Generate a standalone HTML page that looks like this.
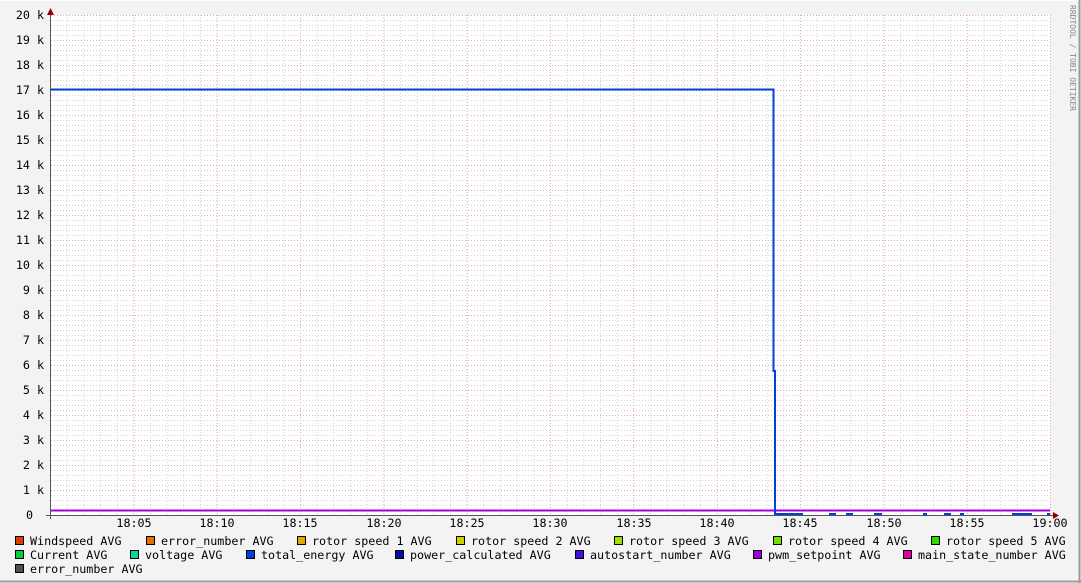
<!DOCTYPE html>
<html><head><meta charset="utf-8"><style>
html,body{margin:0;padding:0;background:#f3f3f3;}
svg{display:block;}
text{font-family:"DejaVu Sans Mono","Liberation Mono",monospace;font-size:11.7px;fill:#000;}
</style></head><body>
<svg width="1081" height="583" xmlns="http://www.w3.org/2000/svg">
<defs>
<pattern id="minV" x="50" y="0" width="16.667" height="583" patternUnits="userSpaceOnUse"><line x1="0.5" y1="0" x2="0.5" y2="583" stroke="#d4d4d4" stroke-dasharray="1,2"/></pattern>
<pattern id="minH" x="0" y="15" width="1081" height="5" patternUnits="userSpaceOnUse"><line x1="0" y1="0.5" x2="1081" y2="0.5" stroke="#d4d4d4" stroke-dasharray="1,2"/></pattern>
<pattern id="majV" x="50" y="0" width="83.333" height="583" patternUnits="userSpaceOnUse"><line x1="0.5" y1="0" x2="0.5" y2="583" stroke="#eaa8a8" stroke-dasharray="1,2"/></pattern>
<pattern id="majH" x="0" y="15" width="1081" height="25" patternUnits="userSpaceOnUse"><line x1="0" y1="0.5" x2="1081" y2="0.5" stroke="#eaa8a8" stroke-dasharray="1,2"/></pattern>
</defs>
<rect x="0" y="0" width="1081" height="583" fill="#f3f3f3"/>
<line x1="0" y1="0.5" x2="1081" y2="0.5" stroke="#fcfcfc"/>
<line x1="1079.5" y1="0" x2="1079.5" y2="583" stroke="#9c9c9c" stroke-width="2"/>
<line x1="0" y1="581.5" x2="1081" y2="581.5" stroke="#9c9c9c" stroke-width="2"/>
<rect x="50" y="15" width="1000" height="500" fill="#fff"/>
<rect x="50" y="15" width="1000" height="500" fill="url(#minV)"/>
<rect x="50" y="15" width="1000" height="500" fill="url(#minH)"/>
<rect x="50" y="15" width="1001" height="500" fill="url(#majV)"/>
<rect x="50" y="15" width="1000" height="500" fill="url(#majH)"/>
<line x1="50" y1="510.5" x2="1050" y2="510.5" stroke="#a000e0" stroke-width="2"/>
<polyline points="50,89.5 773.5,89.5 773.5,371 775,371 775,514 803,514" fill="none" stroke="#0040e0" stroke-width="2"/>
<g stroke="#0040e0" stroke-width="2">
<line x1="829" y1="514" x2="836" y2="514"/><line x1="846" y1="514" x2="853" y2="514"/><line x1="874" y1="514" x2="882" y2="514"/><line x1="923" y1="514" x2="927" y2="514"/><line x1="944" y1="514" x2="951" y2="514"/><line x1="960" y1="514" x2="964" y2="514"/><line x1="1012" y1="514" x2="1032" y2="514"/><line x1="1047" y1="514" x2="1050" y2="514"/>
</g>
<line x1="50.5" y1="10" x2="50.5" y2="519" stroke="#555"/>
<line x1="46" y1="515.5" x2="1055" y2="515.5" stroke="#555"/>
<polygon points="47,15 54,15 50.5,8" fill="#900"/>
<polygon points="1053,512 1053,519 1059,515.5" fill="#900"/>
<g text-anchor="end">
<text x="44" y="19">20 k</text><text x="44" y="44">19 k</text><text x="44" y="69">18 k</text><text x="44" y="94">17 k</text><text x="44" y="119">16 k</text><text x="44" y="144">15 k</text><text x="44" y="169">14 k</text><text x="44" y="194">13 k</text><text x="44" y="219">12 k</text><text x="44" y="244">11 k</text><text x="44" y="269">10 k</text><text x="44" y="294">9 k</text><text x="44" y="319">8 k</text><text x="44" y="344">7 k</text><text x="44" y="369">6 k</text><text x="44" y="394">5 k</text><text x="44" y="419">4 k</text><text x="44" y="444">3 k</text><text x="44" y="469">2 k</text><text x="44" y="494">1 k</text><text x="33" y="519">0</text>
</g>
<g text-anchor="middle">
<text x="134" y="527">18:05</text><text x="217" y="527">18:10</text><text x="300" y="527">18:15</text><text x="384" y="527">18:20</text><text x="467" y="527">18:25</text><text x="550" y="527">18:30</text><text x="634" y="527">18:35</text><text x="717" y="527">18:40</text><text x="800" y="527">18:45</text><text x="884" y="527">18:50</text><text x="967" y="527">18:55</text><text x="1050" y="527">19:00</text>
</g>
<text x="0" y="0" transform="translate(1070,5) rotate(90)" style="font-size:8px;fill:#888">RRDTOOL / TOBI OETIKER</text>
<g stroke="#000" stroke-width="1">
<rect x="15.5" y="536.5" width="8" height="8" fill="#e03c00"/>
<rect x="146.5" y="536.5" width="8" height="8" fill="#e07000"/>
<rect x="297.5" y="536.5" width="8" height="8" fill="#e0a800"/>
<rect x="456.5" y="536.5" width="8" height="8" fill="#d0d000"/>
<rect x="614.5" y="536.5" width="8" height="8" fill="#a0e000"/>
<rect x="773.5" y="536.5" width="8" height="8" fill="#70e000"/>
<rect x="931.5" y="536.5" width="8" height="8" fill="#30d800"/>
<rect x="15.5" y="550.5" width="8" height="8" fill="#00d040"/>
<rect x="130.5" y="550.5" width="8" height="8" fill="#00d8a0"/>
<rect x="246.5" y="550.5" width="8" height="8" fill="#0040e0"/>
<rect x="395.5" y="550.5" width="8" height="8" fill="#0010a0"/>
<rect x="575.5" y="550.5" width="8" height="8" fill="#4010e0"/>
<rect x="753.5" y="550.5" width="8" height="8" fill="#a000e0"/>
<rect x="903.5" y="550.5" width="8" height="8" fill="#e000a0"/>
<rect x="15.5" y="564.5" width="8" height="8" fill="#505050"/>
</g>
<text x="30" y="545">Windspeed AVG</text>
<text x="161" y="545">error_number AVG</text>
<text x="312" y="545">rotor speed 1 AVG</text>
<text x="471" y="545">rotor speed 2 AVG</text>
<text x="629" y="545">rotor speed 3 AVG</text>
<text x="788" y="545">rotor speed 4 AVG</text>
<text x="946" y="545">rotor speed 5 AVG</text>
<text x="30" y="559">Current AVG</text>
<text x="145" y="559">voltage AVG</text>
<text x="261" y="559">total_energy AVG</text>
<text x="410" y="559">power_calculated AVG</text>
<text x="590" y="559">autostart_number AVG</text>
<text x="768" y="559">pwm_setpoint AVG</text>
<text x="918" y="559">main_state_number AVG</text>
<text x="30" y="573">error_number AVG</text>
</svg>
</body></html>
